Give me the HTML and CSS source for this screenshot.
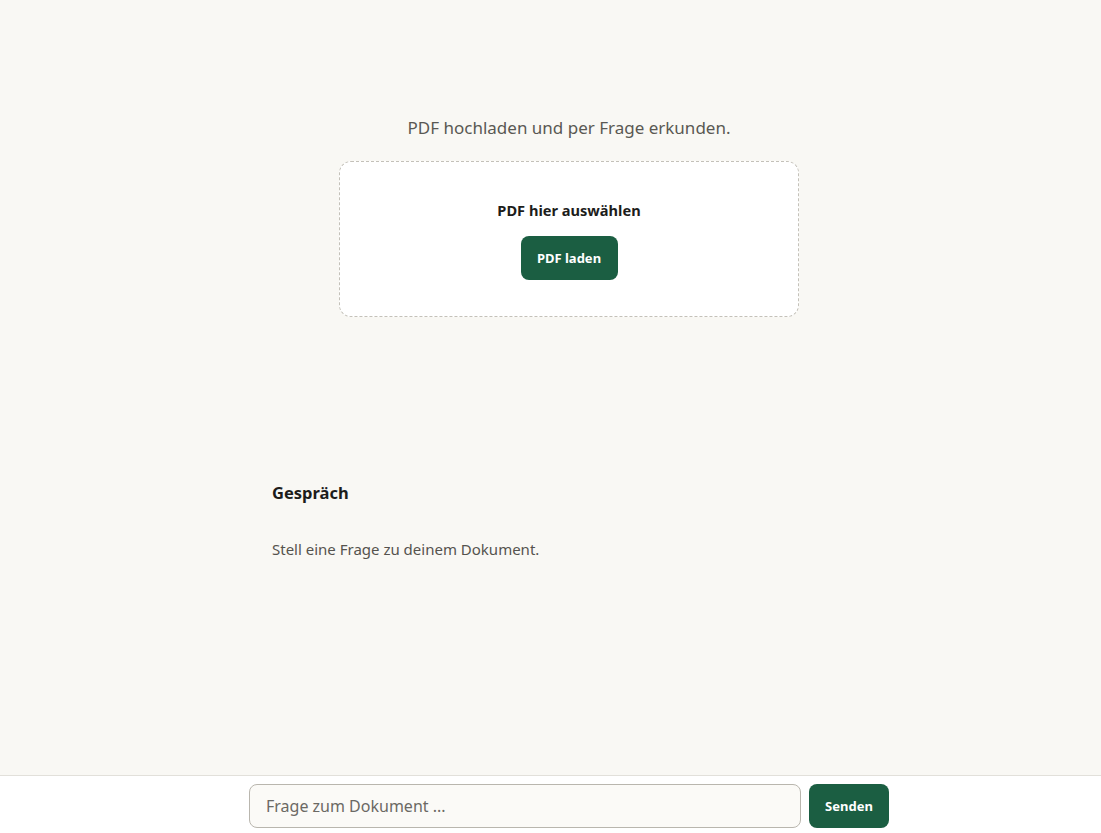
FILE: index.html
```html
<!DOCTYPE html>
<html lang="de">
<head>
<meta charset="utf-8">
<title>PDF Fragen</title>
<link rel="stylesheet" href="styles.css">
</head>
<body>
<div class="page">
  <main class="main">
    <section class="hero">
      <p class="lead">PDF hochladen und per Frage erkunden.</p>
      <div class="dropzone">
        <div class="drop-title">PDF hier auswählen</div>
        <button class="btn">PDF laden</button>
      </div>
    </section>
    <section class="chat">
      <h2 class="chat-title">Gespräch</h2>
      <p class="chat-empty">Stell eine Frage zu deinem Dokument.</p>
    </section>
  </main>
  <footer class="composer">
    <div class="composer-inner">
      <input class="question" type="text" placeholder="Frage zum Dokument ...">
      <button class="btn send">Senden</button>
    </div>
  </footer>
</div>
</body>
</html>
```
FILE: styles.css
```css
* { box-sizing: border-box; }
html, body { margin: 0; height: 100%; }
body {
  background: #f9f8f4;
  font-family: "Noto Sans", "Open Sans", sans-serif;
  color: #1d1d1b;
}
.page {
  min-height: 100vh;
  display: flex;
  flex-direction: column;
}
.main {
  flex: 1;
  padding-left: 37px;
  display: flex;
  flex-direction: column;
  align-items: center;
}
.hero {
  padding-top: 116px;
  display: flex;
  flex-direction: column;
  align-items: center;
}
.lead {
  margin: 0 0 21px;
  font-size: 17px;
  line-height: 24px;
  color: #5a5853;
}
.dropzone {
  width: 460px;
  height: 156px;
  background: #fff;
  border: 1px dashed #c4c1b9;
  border-radius: 12px;
  display: flex;
  flex-direction: column;
  align-items: center;
  padding-top: 37px;
}
.drop-title {
  font-size: 14.6px;
  font-weight: 700;
  line-height: 22px;
  margin-bottom: 15px;
}
.btn {
  font-family: inherit;
  background: #1b5e42;
  color: #fff;
  border: 0;
  border-radius: 8px;
  height: 44px;
  width: 97px;
  font-size: 13px;
  font-weight: 700;
  cursor: pointer;
}
.chat {
  width: 594px;
  padding-top: 164px;
}
.chat-title {
  margin: 0 0 33px;
  font-size: 16.5px;
  font-weight: 700;
  line-height: 24px;
}
.chat-empty {
  margin: 0;
  font-size: 15px;
  line-height: 22px;
  color: #55534e;
}
.composer {
  background: #fff;
  border-top: 1px solid #e2e0da;
  height: 58px;
  padding-left: 37px;
  display: flex;
  justify-content: center;
  padding-top: 8px;
}
.composer-inner {
  display: flex;
  gap: 8px;
  width: 640px;
}
.question {
  flex: 1;
  height: 44px;
  border: 1px solid #b9b6ae;
  border-radius: 8px;
  background: #fbfaf7;
  padding: 0 16px;
  font-family: inherit;
  font-size: 16px;
  color: #1d1d1b;
}
.question::placeholder { color: #6b6964; }
.send { width: 80px; font-size: 13px; }
```
